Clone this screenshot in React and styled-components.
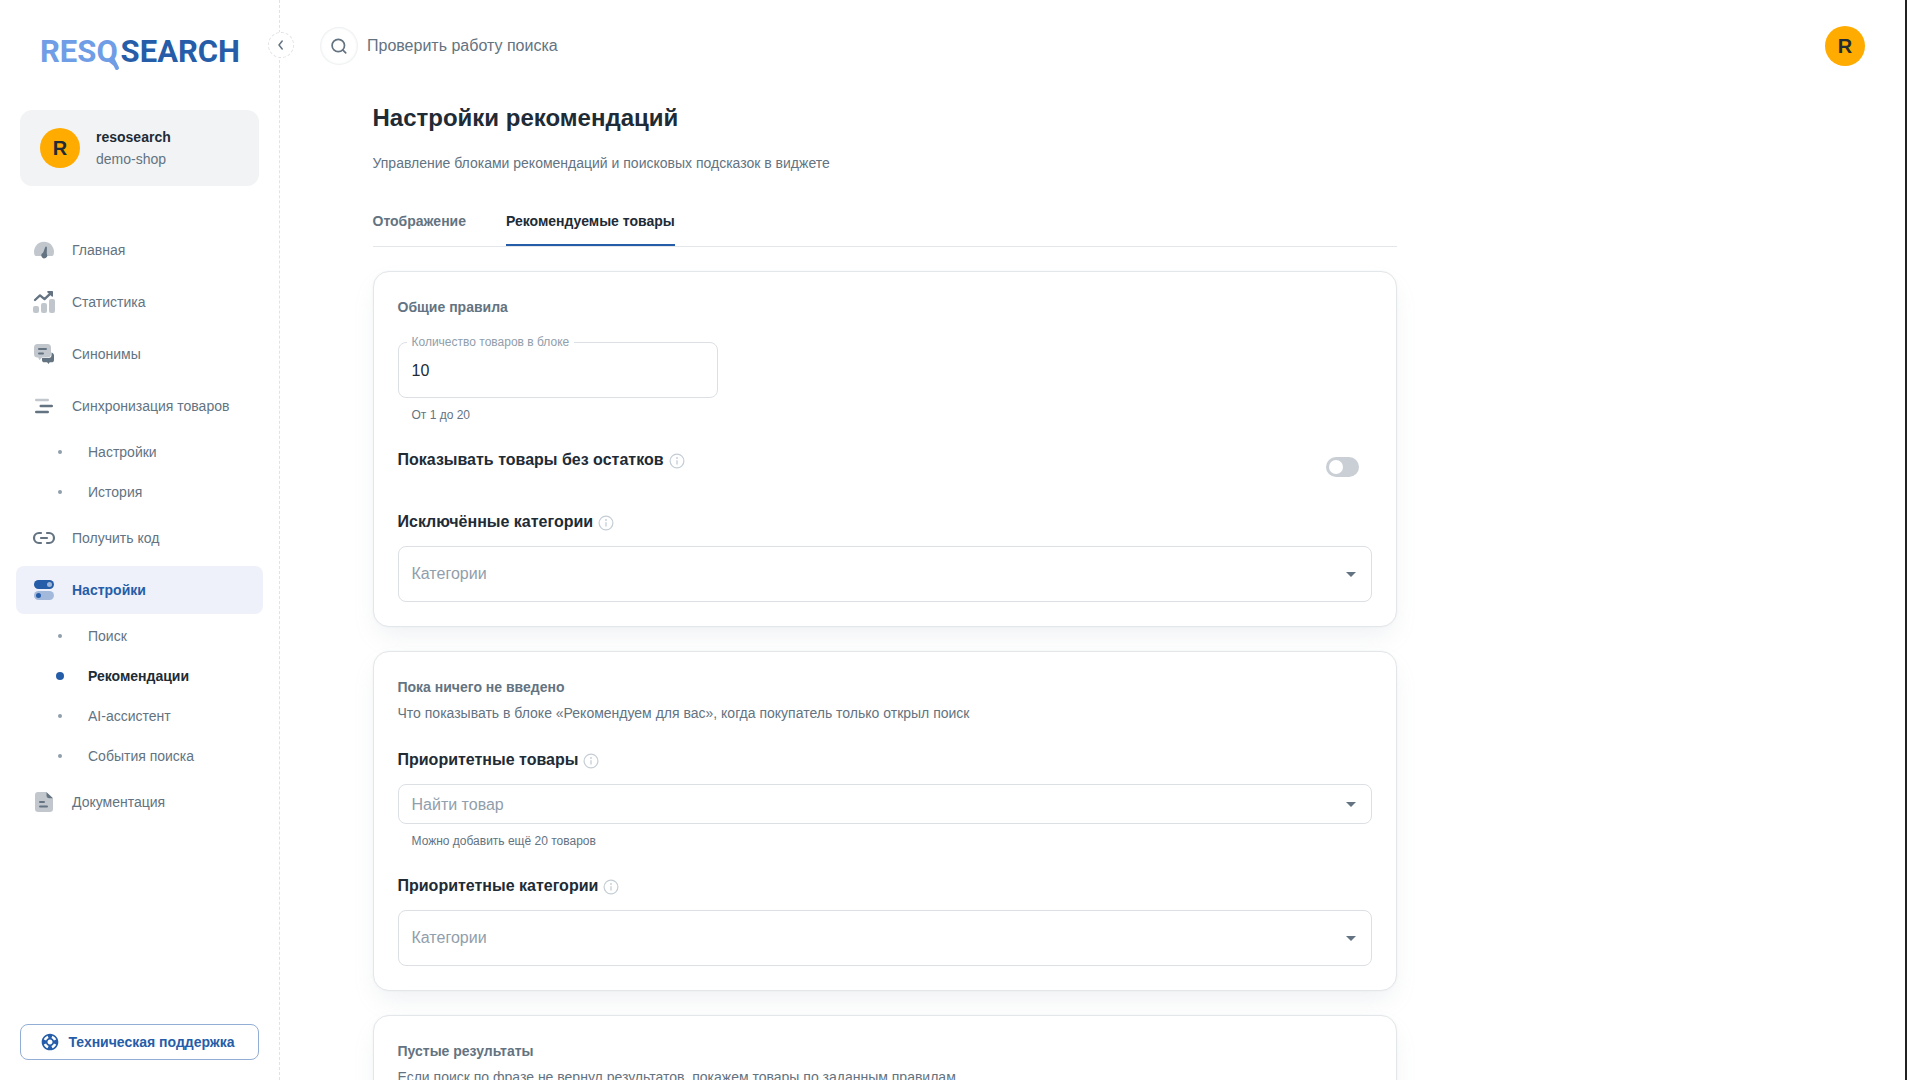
import { useState } from 'react';

import styled, { createGlobalStyle, css } from 'styled-components';

const colors = {
  text: '#212b36',
  secondary: '#637381',
  disabled: '#919eab',
  primary: '#265da8',
  primaryLight: '#6f9de6',
  outline: '#dce0e4',
  divider: '#e3e7ea',
  warning: '#ffab00'
};

const GlobalStyle = createGlobalStyle`
  *,
  *::before,
  *::after {
    box-sizing: border-box;
  }

  body {
    margin: 0;
    background: #fff;
    color: ${colors.text};
    font-family: 'Liberation Sans', Arial, sans-serif;
    font-size: 14px;
    line-height: 22px;
  }

  button,
  input,
  select {
    font: inherit;
    color: inherit;
  }

  a {
    color: inherit;
    text-decoration: none;
  }

  h1,
  h2,
  h3,
  p,
  ul {
    margin: 0;
    padding: 0;
  }

  ul {
    list-style: none;
  }
`;

/* Layout */

const Shell = styled.div`
  display: flex;
  height: 100vh;
  overflow: hidden;
  border-right: 2px solid #212121;
`;

const Sidebar = styled.aside`
  position: relative;
  display: flex;
  flex-direction: column;
  flex: 0 0 280px;
  border-right: 1px dashed #dfe3e6;
`;

const Main = styled.main`
  flex: 1;
  min-width: 0;
  overflow-y: auto;
  scrollbar-width: none;
`;

const Header = styled.header`
  display: flex;
  align-items: center;
  justify-content: space-between;
  height: 92px;
  padding: 0 40px;
`;

const Container = styled.div`
  max-width: 1440px;
  margin: 0 auto;
  padding: 8px 0 40px;
`;

const Content = styled.div`
  max-width: 1024px;
`;

/* Sidebar */

const LogoLink = styled.a`
  display: block;
  padding: 24px 38px 38px;

  svg {
    display: block;
  }
`;

const CollapseButton = styled.button`
  position: absolute;
  top: 32px;
  right: -15px;
  display: flex;
  align-items: center;
  justify-content: center;
  width: 26px;
  height: 26px;
  padding: 0;
  border: 1px dashed #dfe3e6;
  border-radius: 50%;
  background: #fff;
  color: ${colors.secondary};
`;

const Account = styled.a`
  display: flex;
  align-items: center;
  gap: 16px;
  margin: 0 20px 40px;
  padding: 16px 20px;
  border-radius: 12px;
  background: #f2f3f5;
`;

const AccountName = styled.strong`
  display: block;
`;

const AccountShop = styled.span`
  display: block;
  color: ${colors.secondary};
`;

const Avatar = styled.span`
  display: flex;
  align-items: center;
  justify-content: center;
  flex: none;
  width: 40px;
  height: 40px;
  border-radius: 50%;
  background: ${colors.warning};
  color: ${colors.text};
  font-size: 20px;
  font-weight: 700;
`;

const AvatarButton = styled.button`
  padding: 0;
  border: 0;
  border-radius: 50%;
  background: none;
`;

const Nav = styled.nav`
  flex: 1;
  padding: 0 16px;
`;

const NavList = styled.ul`
  display: flex;
  flex-direction: column;
  gap: 4px;
`;

const NavLink = styled.a`
  display: flex;
  align-items: center;
  gap: 16px;
  height: 48px;
  padding: 0 16px;
  border-radius: 8px;
  color: ${colors.secondary};

  ${({ $active }) =>
    $active &&
    css`
      background: #eef1f9;
      color: ${colors.primary};
      font-weight: 700;
    `}
`;

const SubLink = styled(NavLink)`
  height: 36px;
  padding-left: 32px;

  ${({ $active }) =>
    $active &&
    css`
      background: none;
      color: ${colors.text};
    `}
`;

const Bullet = styled.span`
  display: flex;
  align-items: center;
  justify-content: center;
  width: 24px;
  height: 24px;

  &::before {
    content: '';
    width: ${({ $active }) => ($active ? 8 : 4)}px;
    height: ${({ $active }) => ($active ? 8 : 4)}px;
    border-radius: 50%;
    background: ${({ $active }) => ($active ? colors.primary : colors.disabled)};
  }
`;

const SupportButton = styled.button`
  display: flex;
  align-items: center;
  justify-content: center;
  gap: 8px;
  height: 36px;
  margin: 0 20px 20px;
  padding: 0 20px 0 16px;
  border: 1px solid #93aed4;
  border-radius: 8px;
  background: #fff;
  color: ${colors.primary};
  font-weight: 700;
`;

/* Header */

const SearchButton = styled.button`
  display: flex;
  align-items: center;
  gap: 9px;
  padding: 0;
  border: 0;
  background: none;
  color: ${colors.secondary};
  font-size: 16px;
`;

const SearchCircle = styled.span`
  display: flex;
  align-items: center;
  justify-content: center;
  width: 38px;
  height: 38px;
  border-radius: 50%;
  box-shadow: inset 0 0 2px 1px rgba(145, 158, 171, 0.2);
`;

/* Content */

const Title = styled.h1`
  margin-bottom: 16px;
  font-size: 24px;
  line-height: 36px;
`;

const Muted = styled.p`
  color: ${colors.secondary};
`;

const Tabs = styled.div`
  display: flex;
  gap: 40px;
  margin: 24px 0;
  border-bottom: 1px solid ${colors.divider};
`;

const Tab = styled.button`
  height: 48px;
  padding: 0 0 2px;
  border: 0;
  background: none;
  color: ${({ $active }) => ($active ? colors.text : colors.secondary)};
  box-shadow: ${({ $active }) => ($active ? `inset 0 -2px ${colors.primary}` : 'none')};
  font-weight: 700;
`;

const Card = styled.section`
  display: flex;
  flex-direction: column;
  gap: 24px;
  margin-bottom: 24px;
  padding: 24px;
  border: 1px solid ${colors.divider};
  border-radius: 16px;
  background: #fff;
  box-shadow:
    0 0 2px rgba(145, 158, 171, 0.12),
    0 12px 24px -4px rgba(145, 158, 171, 0.14);
`;

const CardHead = styled.div`
  display: flex;
  flex-direction: column;
  gap: 4px;
`;

const CardTitle = styled.h2`
  color: ${colors.secondary};
  font-size: 14px;
  line-height: 22px;
`;

const Group = styled.div`
  display: flex;
  flex-direction: column;
  gap: 12px;
`;

const SwitchRow = styled.div`
  display: flex;
  align-items: flex-start;
  justify-content: space-between;
`;

const Label = styled.h3`
  display: flex;
  align-items: center;
  gap: 4px;
  font-size: 16px;
  line-height: 24px;

  svg {
    margin-top: 2px;
    color: #c4cdd5;
  }
`;

const Field = styled.div`
  position: relative;
  max-width: ${({ $narrow }) => ($narrow ? '320px' : 'none')};

  & > svg {
    position: absolute;
    top: 50%;
    right: 9px;
    margin-top: -12px;
    color: ${colors.secondary};
    pointer-events: none;
  }
`;

const control = css`
  display: block;
  width: 100%;
  height: ${({ $small }) => ($small ? 40 : 56)}px;
  border: 1px solid ${colors.outline};
  border-radius: 8px;
  outline: none;
  background: #fff;
  font-size: 16px;
`;

const Input = styled.input`
  ${control}
  padding: 2px 13px 0;

  &::placeholder {
    color: ${colors.disabled};
    opacity: 1;
  }
`;

const Select = styled.select`
  ${control}
  appearance: none;
  padding: 0 13px;
  color: ${colors.disabled};
`;

const FloatingLabel = styled.label`
  position: absolute;
  top: -9px;
  left: 9px;
  padding: 0 5px;
  background: #fff;
  color: ${colors.disabled};
  font-size: 12px;
  line-height: 18px;
`;

const Helper = styled.p`
  margin: 8px 14px 0;
  color: ${colors.secondary};
  font-size: 12px;
  line-height: 18px;
`;

const Switch = styled.input`
  appearance: none;
  display: flex;
  width: 33px;
  height: 20px;
  margin: 9px 13px 9px 12px;
  padding: 3px;
  border-radius: 10px;
  background: ${({ checked }) => (checked ? colors.primary : '#c9cfd5')};

  &::before {
    content: '';
    width: 14px;
    height: 14px;
    margin-left: ${({ checked }) => (checked ? 13 : 0)}px;
    border-radius: 50%;
    background: #fff;
  }
`;

/* Icons */

const NavSvg = ({ children }) => (
  <svg width="24" height="24" viewBox="0 0 24 24" fill="none" aria-hidden="true">
    {children}
  </svg>
);

const HomeIcon = () => (
  <NavSvg>
    <path
      opacity=".4"
      fill="currentColor"
      d="M4.2 18a2 2 0 0 1-1.7-1.1A10 10 0 1 1 21.5 16.9a2 2 0 0 1-1.7 1.1Z"
    />
    <path fill="currentColor" d="M13.2 9.2c.2-1 1.700-.9 1.700.2l-.1 6.600a2.900 2.900 0 1 1-3.700-1.200Z" />
  </NavSvg>
);

const StatsIcon = () => (
  <NavSvg>
    <g opacity=".4" fill="currentColor">
      <rect x="1" y="16" width="6" height="7" rx="2" />
      <rect x="9" y="13" width="6" height="10" rx="2" />
      <rect x="17" y="9" width="6" height="14" rx="2" />
    </g>
    <path
      d="m3 10 5-4.600 4.500 3.700L18.600 3.300"
      stroke="currentColor"
      strokeWidth="2.300"
      strokeLinecap="round"
      strokeLinejoin="round"
    />
    <path d="M16 1h4.200a.8.8 0 0 1 .8.8V6c0 .8-.7 1-1.200.5l-4.300-4.300C15 1.700 15.300 1 16 1Z" fill="currentColor" />
  </NavSvg>
);

const SynonymsIcon = () => (
  <NavSvg>
    <path
      fill="currentColor"
      d="M19.500 10.500C21.200 11 22 12 22 13.500v4.200c0 1.800-.8 2.600-2.600 2.600h-1.700L16.500 22l-1.400-1.700h-2.600c-1.600 0-2.500-.8-2.500-2.300v-2h6.500c2.200 0 3-1 3-3Z"
    />
    <path
      fill="#c1c7cd"
      d="M5.500 2h10A3.500 3.500 0 0 1 19 5.500V12a3.500 3.500 0 0 1-3.500 3.500H10L7.500 18.300 6.200 15.500h-.7A3.500 3.500 0 0 1 2 12V5.500A3.500 3.500 0 0 1 5.500 2Z"
    />
    <path d="M7 7h7M7 11.500h4" stroke="currentColor" strokeWidth="2" strokeLinecap="round" />
  </NavSvg>
);

const SyncIcon = () => (
  <NavSvg>
    <g stroke="currentColor" strokeWidth="2.400" strokeLinecap="round">
      <path opacity=".4" d="M4.200 6h11.600" />
      <path d="M8.700 12h11.100M4.200 18h11.600" />
    </g>
  </NavSvg>
);

const CodeIcon = () => (
  <NavSvg>
    <path
      d="M9 7H7a5 5 0 0 0 0 10h2M15 7h2a5 5 0 0 1 0 10h-2M9 12h6"
      stroke="currentColor"
      strokeWidth="2.200"
      strokeLinecap="round"
    />
  </NavSvg>
);

const SettingsIcon = () => (
  <NavSvg>
    <rect x="2" y="2" width="20" height="9" rx="4.500" fill="currentColor" />
    <circle cx="17.500" cy="6.500" r="2.500" fill="#9db6d9" />
    <rect x="2" y="13" width="20" height="9" rx="4.500" fill="#a3b9dc" />
    <circle cx="6.500" cy="17.500" r="2.500" fill="currentColor" />
  </NavSvg>
);

const DocsIcon = () => (
  <NavSvg>
    <path
      opacity=".4"
      fill="currentColor"
      d="M6 2h8.500L21 8.500V19a3 3 0 0 1-3 3H6a3 3 0 0 1-3-3V5a3 3 0 0 1 3-3Z"
    />
    <path fill="currentColor" d="M14.500 2.200 21 8.200h-3.600a2.900 2.900 0 0 1-2.900-2.900Z" />
    <path d="M8 12h4M8 16.500h7" stroke="currentColor" strokeWidth="2" strokeLinecap="round" />
  </NavSvg>
);

const SupportIcon = () => (
  <svg width="20" height="20" viewBox="0 0 24 24" fill="currentColor" aria-hidden="true">
    <path d="M12 2C6.480 2 2 6.480 2 12s4.480 10 10 10 10-4.480 10-10S17.520 2 12 2m7.460 7.120-2.780 1.150c-.51-1.360-1.580-2.440-2.950-2.940l1.150-2.780c2.100.8 3.770 2.470 4.580 4.570M12 15c-1.660 0-3-1.340-3-3s1.340-3 3-3 3 1.340 3 3-1.340 3-3 3M9.130 4.540l1.170 2.780c-1.380.5-2.470 1.590-2.980 2.970L4.540 9.130c.81-2.110 2.480-3.780 4.590-4.590M4.540 14.870l2.780-1.150c.51 1.380 1.590 2.460 2.970 2.960l-1.170 2.780c-2.100-.81-3.770-2.480-4.580-4.590m10.340 4.590-1.150-2.780c1.370-.51 2.450-1.590 2.950-2.970l2.780 1.170c-.81 2.100-2.480 3.770-4.580 4.580" />
  </svg>
);

const SearchIcon = () => (
  <svg width="20" height="20" viewBox="0 0 20 20" fill="none" aria-hidden="true">
    <path
      d="M9.300 3.300a6.200 6.200 0 1 1 0 12.400 6.200 6.200 0 0 1 0-12.400ZM13.700 13.900l3 3"
      stroke="currentColor"
      strokeWidth="1.700"
      strokeLinecap="round"
    />
  </svg>
);

const ChevronLeft = () => (
  <svg width="16" height="16" viewBox="0 0 16 16" fill="none" aria-hidden="true">
    <path d="m9.200 4-3.200 4 3.200 4" stroke="currentColor" strokeWidth="1.500" strokeLinecap="round" strokeLinejoin="round" />
  </svg>
);

const InfoIcon = () => (
  <svg width="18" height="18" viewBox="0 0 18 18" fill="none" aria-hidden="true">
    <circle cx="9" cy="9" r="6.900" stroke="currentColor" strokeWidth="1.200" />
    <path d="M9 8.200v4.200" stroke="currentColor" strokeWidth="1.300" />
    <circle cx="9" cy="6" r=".9" fill="currentColor" />
  </svg>
);

const CaretIcon = () => (
  <svg width="24" height="24" viewBox="0 0 24 24" fill="currentColor" aria-hidden="true">
    <path d="m7 10 5 5 5-5z" />
  </svg>
);

const Logo = () => (
  <svg width="202" height="48" viewBox="0 0 202 48">
    <g fontFamily="Roboto, sans-serif" fontSize="31" fontWeight="700">
      <text x="2" y="38" fill={colors.primaryLight}>
        RESQ
      </text>
      <text x="202" y="38" textAnchor="end" fill={colors.primary}>
        SEARCH
      </text>
    </g>
    <path d="m75 36 4 8" stroke={colors.primaryLight} strokeWidth="4" strokeLinecap="round" />
  </svg>
);

const menu = [
  { title: 'Главная', icon: HomeIcon },
  { title: 'Статистика', icon: StatsIcon },
  { title: 'Синонимы', icon: SynonymsIcon },
  { title: 'Синхронизация товаров', icon: SyncIcon },
  { title: 'Настройки', sub: true },
  { title: 'История', sub: true },
  { title: 'Получить код', icon: CodeIcon },
  { title: 'Настройки', icon: SettingsIcon, active: true },
  { title: 'Поиск', sub: true },
  { title: 'Рекомендации', sub: true, active: true },
  { title: 'AI-ассистент', sub: true },
  { title: 'События поиска', sub: true },
  { title: 'Документация', icon: DocsIcon }
];

const tabs = ['Отображение', 'Рекомендуемые товары'];

const MenuItem = ({ title, icon: Icon, sub, active }) => (
  <li>
    {sub ? (
      <SubLink href="#" $active={active}>
        <Bullet $active={active} />
        {title}
      </SubLink>
    ) : (
      <NavLink href="#" $active={active}>
        <Icon />
        {title}
      </NavLink>
    )}
  </li>
);

const CategorySelect = ({ id, title }) => (
  <Group>
    <Label>
      <label htmlFor={id}>{title}</label>
      <InfoIcon />
    </Label>
    <Field>
      <Select id={id} defaultValue="">
        <option value="">Категории</option>
      </Select>
      <CaretIcon />
    </Field>
  </Group>
);

const App = () => {
  const [tab, setTab] = useState(1);
  const [count, setCount] = useState('10');
  const [outOfStock, setOutOfStock] = useState(false);

  return (
    <>
      <GlobalStyle />
      <Shell>
        <Sidebar>
          <LogoLink href="#">
            <Logo />
          </LogoLink>
          <CollapseButton type="button" aria-label="Свернуть меню">
            <ChevronLeft />
          </CollapseButton>
          <Account href="#">
            <Avatar>R</Avatar>
            <div>
              <AccountName>resosearch</AccountName>
              <AccountShop>demo-shop</AccountShop>
            </div>
          </Account>
          <Nav>
            <NavList>
              {menu.map((item, i) => (
                <MenuItem key={i} {...item} />
              ))}
            </NavList>
          </Nav>
          <SupportButton type="button">
            <SupportIcon />
            Техническая поддержка
          </SupportButton>
        </Sidebar>

        <Main>
          <Header>
            <SearchButton type="button">
              <SearchCircle>
                <SearchIcon />
              </SearchCircle>
              Проверить работу поиска
            </SearchButton>
            <AvatarButton type="button">
              <Avatar>R</Avatar>
            </AvatarButton>
          </Header>

          <Container>
            <Content>
              <Title>Настройки рекомендаций</Title>
              <Muted>Управление блоками рекомендаций и поисковых подсказок в виджете</Muted>

              <Tabs role="tablist">
                {tabs.map((title, i) => (
                  <Tab
                    key={title}
                    type="button"
                    role="tab"
                    aria-selected={tab === i}
                    $active={tab === i}
                    onClick={() => setTab(i)}
                  >
                    {title}
                  </Tab>
                ))}
              </Tabs>

              <Card>
                <CardTitle>Общие правила</CardTitle>
                <div>
                  <Field $narrow>
                    <Input id="count" value={count} onChange={(e) => setCount(e.target.value)} />
                    <FloatingLabel htmlFor="count">Количество товаров в блоке</FloatingLabel>
                  </Field>
                  <Helper>От 1 до 20</Helper>
                </div>
                <SwitchRow>
                  <Label>
                    <label htmlFor="stock">Показывать товары без остатков</label>
                    <InfoIcon />
                  </Label>
                  <Switch
                    id="stock"
                    type="checkbox"
                    checked={outOfStock}
                    onChange={(e) => setOutOfStock(e.target.checked)}
                  />
                </SwitchRow>
                <CategorySelect id="excluded" title="Исключённые категории" />
              </Card>

              <Card>
                <CardHead>
                  <CardTitle>Пока ничего не введено</CardTitle>
                  <Muted>Что показывать в блоке «Рекомендуем для вас», когда покупатель только открыл поиск</Muted>
                </CardHead>
                <Group>
                  <Label>
                    <label htmlFor="products">Приоритетные товары</label>
                    <InfoIcon />
                  </Label>
                  <div>
                    <Field>
                      <Input id="products" $small placeholder="Найти товар" />
                      <CaretIcon />
                    </Field>
                    <Helper>Можно добавить ещё 20 товаров</Helper>
                  </div>
                </Group>
                <CategorySelect id="priority" title="Приоритетные категории" />
              </Card>

              <Card>
                <CardHead>
                  <CardTitle>Пустые результаты</CardTitle>
                  <Muted>Если поиск по фразе не вернул результатов, покажем товары по заданным правилам</Muted>
                </CardHead>
              </Card>
            </Content>
          </Container>
        </Main>
      </Shell>
    </>
  );
};

export default App;
